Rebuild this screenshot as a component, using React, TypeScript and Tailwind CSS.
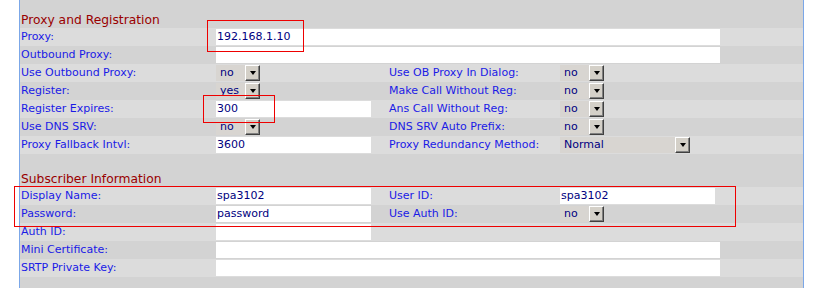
type Cell =
  | { kind: "input"; value: string; w: string }
  | { kind: "select"; value: string; w: string };

type Row = { label: string; cell: Cell; label2?: string; cell2?: Cell };

const FULL = "w-[504px]";
const SHORT = "w-[155px]";
const SEL = "w-[44px]";

const proxyRows: Row[] = [
  { label: "Proxy:", cell: { kind: "input", value: "192.168.1.10", w: FULL } },
  { label: "Outbound Proxy:", cell: { kind: "input", value: "", w: FULL } },
  {
    label: "Use Outbound Proxy:",
    cell: { kind: "select", value: "no", w: SEL },
    label2: "Use OB Proxy In Dialog:",
    cell2: { kind: "select", value: "no", w: SEL },
  },
  {
    label: "Register:",
    cell: { kind: "select", value: "yes", w: SEL },
    label2: "Make Call Without Reg:",
    cell2: { kind: "select", value: "no", w: SEL },
  },
  {
    label: "Register Expires:",
    cell: { kind: "input", value: "300", w: SHORT },
    label2: "Ans Call Without Reg:",
    cell2: { kind: "select", value: "no", w: SEL },
  },
  {
    label: "Use DNS SRV:",
    cell: { kind: "select", value: "no", w: SEL },
    label2: "DNS SRV Auto Prefix:",
    cell2: { kind: "select", value: "no", w: SEL },
  },
  {
    label: "Proxy Fallback Intvl:",
    cell: { kind: "input", value: "3600", w: SHORT },
    label2: "Proxy Redundancy Method:",
    cell2: { kind: "select", value: "Normal", w: "w-[130px]" },
  },
];

const subscriberRows: Row[] = [
  {
    label: "Display Name:",
    cell: { kind: "input", value: "spa3102", w: SHORT },
    label2: "User ID:",
    cell2: { kind: "input", value: "spa3102", w: SHORT },
  },
  {
    label: "Password:",
    cell: { kind: "input", value: "password", w: SHORT },
    label2: "Use Auth ID:",
    cell2: { kind: "select", value: "no", w: SEL },
  },
  { label: "Auth ID:", cell: { kind: "input", value: "", w: SHORT } },
  { label: "Mini Certificate:", cell: { kind: "input", value: "", w: FULL } },
  { label: "SRTP Private Key:", cell: { kind: "input", value: "", w: FULL } },
];

function Field({ cell }: { cell: Cell }) {
  if (cell.kind === "input") {
    return (
      <div className={`${cell.w} h-[16px] bg-white pl-px leading-[16px] text-[#000080] whitespace-nowrap`}>
        {cell.value}
      </div>
    );
  }
  return (
    <div className={`${cell.w} h-[16px] flex bg-[#d8d5d1] text-[#000080]`}>
      <span className="flex-1 pl-[4px] leading-[16px] whitespace-nowrap overflow-hidden">{cell.value}</span>
      <span className="w-[15px] h-[16px] flex items-center justify-center bg-[#d4d0c8] border-t border-l border-white border-r border-b border-r-[#404040] border-b-[#404040] shadow-[inset_-1px_-1px_0_#808080]">
        <span className="w-0 h-0 border-l-[3px] border-r-[3px] border-t-[4px] border-l-transparent border-r-transparent border-t-black mb-px" />
      </span>
    </div>
  );
}

function FormRow({ row, light }: { row: Row; light: boolean }) {
  return (
    <div className={`flex h-[18px] items-center ${light ? "bg-[#dcdcdc]" : "bg-[#d3d3d3]"}`}>
      <div className="w-[196px] pl-px text-[#1a1ae6] whitespace-nowrap">{row.label}</div>
      <div className="w-[173px]">
        <Field cell={row.cell} />
      </div>
      {row.label2 && (
        <>
          <div className="w-[171px] text-[#1a1ae6] whitespace-nowrap">{row.label2}</div>
          {row.cell2 && <Field cell={row.cell2} />}
        </>
      )}
    </div>
  );
}

function Section({ title, rows, top }: { title: string; rows: Row[]; top: string }) {
  return (
    <div>
      <div className={`${top} pl-px text-[12.3px] leading-[14px] text-[#990000]`}>{title}</div>
      {rows.map((r, i) => (
        <FormRow key={r.label} row={r} light={i % 2 === 0} />
      ))}
    </div>
  );
}

export default function App() {
  return (
    <div className="relative w-[820px] h-[288px] overflow-hidden bg-white font-['DejaVu_Sans',sans-serif] text-[11px]">
      <div className="ml-[19px] w-[785px] h-[288px] border-l border-r border-[#7ba7e8] bg-[#d3d3d3]">
        <Section title="Proxy and Registration" rows={proxyRows} top="h-[28px] pt-[13px]" />
        <Section title="Subscriber Information" rows={subscriberRows} top="h-[33px] pt-[18px]" />
      </div>

      {/* annotation boxes */}
      <div className="absolute left-[207px] top-[20px] w-[97px] h-[32px] border border-[#ee0000]" />
      <div className="absolute left-[203px] top-[95px] w-[72px] h-[28px] border border-[#ee0000]" />
      <div className="absolute left-[14px] top-[186px] w-[722px] h-[41px] border border-[#ee0000]" />
    </div>
  );
}
